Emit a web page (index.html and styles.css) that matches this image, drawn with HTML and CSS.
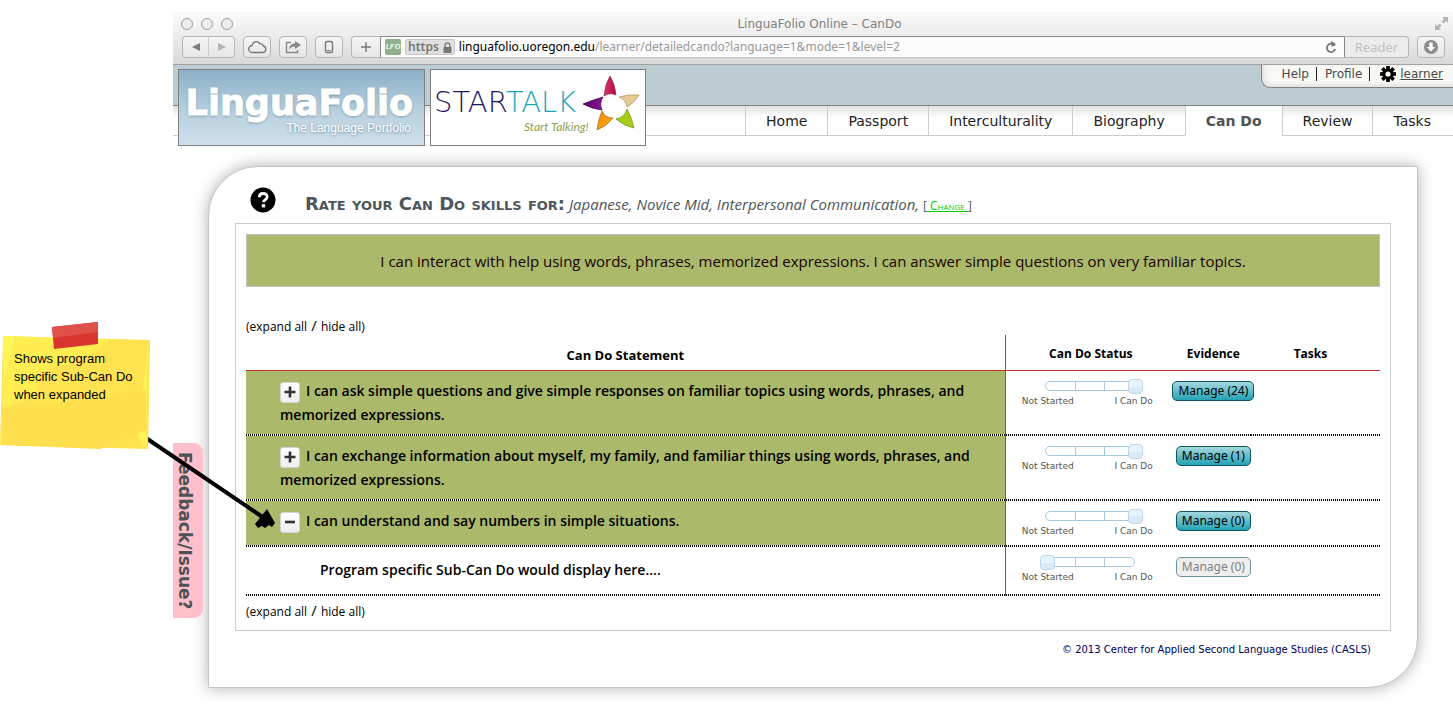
FILE: index.html
```html
<!DOCTYPE html>
<html lang="en">
<head>
<meta charset="utf-8">
<title>LinguaFolio Online – CanDo</title>
<link rel="stylesheet" href="styles.css">
</head>
<body>
<div class="window">
  <header class="chrome">
    <div class="titlebar">
      <div class="lights"><span></span><span></span><span></span></div>
      <div class="title">LinguaFolio Online – CanDo</div>
      <svg class="fullscreen" width="15" height="15" viewBox="0 0 15 15"><path d="M8 1h6v6l-2-2-2.500 2.500-2-2L10 3zM1 8l2 2 2.500-2.500 2 2L5 12l2 2H1z" fill="#b4b4b4"/></svg>
    </div>
    <div class="toolbar">
      <div class="pair">
        <button class="tool" aria-label="Back"><svg width="10" height="10" viewBox="0 0 10 10"><path d="M9 1v8L1 5z" fill="#7c7c7c"/></svg></button>
        <button class="tool" aria-label="Forward"><svg width="10" height="10" viewBox="0 0 10 10"><path d="M1 1v8l8-4z" fill="#b5b5b5"/></svg></button>
      </div>
      <button class="tool" aria-label="iCloud"><svg width="20" height="14" viewBox="0 0 20 14"><path d="M5 12.500h10.500a3.300 3.300 0 0 0 .8-6.500 3.300 3.300 0 0 0-3.600-2.400A4 4 0 0 0 5.300 5.500 3.500 3.500 0 0 0 5 12.500z" fill="none" stroke="#777" stroke-width="1.300"/></svg></button>
      <button class="tool" aria-label="Share"><svg width="18" height="14" viewBox="0 0 18 14"><path d="M7 2.500H2.500v10h11V10" fill="none" stroke="#888" stroke-width="1.400"/><path d="M11 1l6 4-6 4V6.500c-3 0-4.500 1-6 3 .4-3.500 2.500-6 6-6z" fill="#888"/></svg></button>
      <button class="tool" aria-label="Device"><svg width="10" height="14" viewBox="0 0 10 14"><rect x="1.500" y="1.500" width="7" height="11" rx="1.500" fill="none" stroke="#777" stroke-width="1.400"/><path d="M3 10.500h4" stroke="#777"/></svg></button>
      <div class="address">
        <button class="add" aria-label="Add bookmark"><svg width="12" height="12" viewBox="0 0 12 12"><path d="M6 1v10M1 6h10" stroke="#777" stroke-width="1.400"/></svg></button>
        <div class="field">
          <span class="favicon">LFO</span>
          <span class="https">https <svg width="9" height="11" viewBox="0 0 9 11"><path d="M2.200 5.500V3.200a2.300 2.300 0 0 1 4.600 0V5.500" fill="none" stroke="#777" stroke-width="1.300"/><path d="M.5 5h8v6h-8z" fill="#777"/></svg></span>
          <span class="url"><b>linguafolio.uoregon.edu</b>/learner/detailedcando?language=1&amp;mode=1&amp;level=2</span>
          <svg class="reload" width="12" height="13" viewBox="0 0 12 13"><path d="M9.800 4.700A4.200 4.200 0 1 0 10.200 8" fill="none" stroke="#777" stroke-width="1.800"/><path d="M6 0l5 3-4.500 3z" fill="#777"/></svg>
        </div>
        <button class="reader" disabled>Reader</button>
      </div>
      <button class="tool" aria-label="Downloads"><svg width="14" height="14" viewBox="0 0 14 14"><circle cx="7" cy="7" r="7" fill="#8b8b8b"/><path d="M5.300 2.500h3.400V7h2.600L7 11.500 2.700 7h2.600z" fill="#fff"/></svg></button>
    </div>
  </header>

  <div class="site-head">
    <div class="logos">
      <a class="logo-lf" href="#"><span class="lf-name">LinguaFolio</span><span class="lf-tag">The Language Portfolio</span></a>
      <a class="logo-st" href="#">
        <svg width="214" height="75" viewBox="0 0 214 75">
          <defs>
            <linearGradient id="g1" x1="0" x2="1"><stop offset="0" stop-color="#e0306c"/><stop offset="1" stop-color="#b00f45"/></linearGradient>
            <linearGradient id="g2" x1="0" x2="1"><stop offset="0" stop-color="#520064"/><stop offset="1" stop-color="#8a1a96"/></linearGradient>
            <linearGradient id="g3" x1="0" x2="1" y2="1"><stop offset="0" stop-color="#ff7a00"/><stop offset="1" stop-color="#ffb91e"/></linearGradient>
          </defs>
          <text class="st-text" x="3" y="42"><tspan fill="#1c1464">STAR</tspan><tspan fill="#18a8ba">TALK</tspan></text>
          <text class="st-sub" x="93" y="61" fill="#8da04e">Start Talking!</text>
          <path d="M179 6Q174 14 173 26Q179 22 185 25Q184 14 179 6z" fill="url(#g1)" stroke="#8c3058" stroke-width=".7"/>
          <path d="M152 34Q161 30 172 27Q168 33 171 40Q161 39 152 34z" fill="url(#g2)" stroke="#400050" stroke-width=".7"/>
          <path d="M208 25Q199 24 188 27Q195 30 196 37Q203 33 208 25z" fill="#e6cb92" stroke="#a98b54" stroke-width=".7"/>
          <path d="M166 60Q167 50 171 41Q174 48 182 48Q176 56 166 60z" fill="url(#g3)" stroke="#9c6a20" stroke-width=".7"/>
          <path d="M203 58Q201 48 196 39Q194 47 185 49Q193 56 203 58z" fill="#a5cc16" stroke="#6f8d1f" stroke-width=".7"/>
        </svg>
      </a>
    </div>
    <div class="head-right">
      <div class="user-links">
        <a href="#">Help</a><a href="#">Profile</a>
        <a class="learner" href="#"><svg width="16" height="16" viewBox="-8 -8 16 16"><g fill="#000"><rect x="-1.800" y="-8" width="3.600" height="16"/><rect x="-1.800" y="-8" width="3.600" height="16" transform="rotate(45)"/><rect x="-1.800" y="-8" width="3.600" height="16" transform="rotate(90)"/><rect x="-1.800" y="-8" width="3.600" height="16" transform="rotate(135)"/><circle r="5.800"/></g><circle r="2.600" fill="#f8f8f4"/></svg><span>learner</span></a>
      </div>
    </div>
    <nav class="tabs">
      <a href="#">Home</a><a href="#">Passport</a><a href="#">Interculturality</a><a href="#">Biography</a><a class="active" href="#">Can Do</a><a href="#">Review</a><a href="#">Tasks</a>
    </nav>
  </div>

  <main class="panel">
    <div class="heading">
      <svg class="help" width="26" height="26" viewBox="0 0 26 26"><circle cx="13" cy="13" r="12.500"/><path d="M9.300 10.300q0-3.800 3.900-3.800t3.900 3.300q0 1.700-1.900 2.900-1.700 1-1.700 2.600" fill="none" stroke="#fff" stroke-width="2.800"/><rect x="11.800" y="17.200" width="3.400" height="3.200" fill="#fff"/></svg>
      <h1>Rate your Can Do skills for:</h1>
      <p class="selection"><i>Japanese, Novice Mid, Interpersonal Communication,</i> <span class="change">[<a href="#"> Change </a>]</span></p>
    </div>
    <section class="box">
      <div class="banner">I can interact with help using words, phrases, memorized expressions. I can answer simple questions on very familiar topics.</div>
      <div class="toggle top"><a href="#">(expand all</a> <span>/</span> <a href="#">hide all)</a></div>
      <table class="cando">
        <colgroup><col class="c1"><col class="c2"><col class="c3"><col></colgroup>
        <thead><tr><th class="main">Can Do Statement</th><th>Can Do Status</th><th>Evidence</th><th class="tasks">Tasks</th></tr></thead>
        <tbody>
          <tr class="tall">
            <td class="statement"><button class="exp" aria-label="Expand"><svg width="12" height="12" viewBox="0 0 12 12"><path d="M6 .5v11M.5 6h11" stroke="#333" stroke-width="2.600"/></svg></button>I can ask simple questions and give simple responses on familiar topics using words, phrases, and memorized expressions.</td>
            <td><div class="status"><div class="slider"><svg width="103" height="15" viewBox="0 0 103 15"><rect class="track" x="5.500" y="2.500" width="89" height="9" rx="4.500"/><path class="track" d="M35.500 3v8M64.500 3v8"/></svg><input type="range" min="0" max="3" value="3" aria-label="Status"></div><div class="ends"><span>Not Started</span><span>I Can Do</span></div></div></td>
            <td class="ev"><button class="manage">Manage (24)</button></td><td></td>
          </tr>
          <tr class="tall">
            <td class="statement"><button class="exp" aria-label="Expand"><svg width="12" height="12" viewBox="0 0 12 12"><path d="M6 .5v11M.5 6h11" stroke="#333" stroke-width="2.600"/></svg></button>I can exchange information about myself, my family, and familiar things using words, phrases, and memorized expressions.</td>
            <td><div class="status"><div class="slider"><svg width="103" height="15" viewBox="0 0 103 15"><rect class="track" x="5.500" y="2.500" width="89" height="9" rx="4.500"/><path class="track" d="M35.500 3v8M64.500 3v8"/></svg><input type="range" min="0" max="3" value="3" aria-label="Status"></div><div class="ends"><span>Not Started</span><span>I Can Do</span></div></div></td>
            <td class="ev"><button class="manage">Manage (1)</button></td><td></td>
          </tr>
          <tr class="short">
            <td class="statement"><button class="exp" aria-label="Collapse"><svg width="12" height="12" viewBox="0 0 12 12"><path d="M1 6h10" stroke="#333" stroke-width="2.600"/></svg></button>I can understand and say numbers in simple situations.</td>
            <td><div class="status"><div class="slider"><svg width="103" height="15" viewBox="0 0 103 15"><rect class="track" x="5.500" y="2.500" width="89" height="9" rx="4.500"/><path class="track" d="M35.500 3v8M64.500 3v8"/></svg><input type="range" min="0" max="3" value="3" aria-label="Status"></div><div class="ends"><span>Not Started</span><span>I Can Do</span></div></div></td>
            <td class="ev"><button class="manage">Manage (0)</button></td><td></td>
          </tr>
          <tr class="sub">
            <td class="statement">Program specific Sub-Can Do would display here....</td>
            <td><div class="status"><div class="slider"><svg width="103" height="15" viewBox="0 0 103 15"><rect class="track" x="5.500" y="2.500" width="89" height="9" rx="4.500"/><path class="track" d="M35.500 3v8M64.500 3v8"/></svg><input type="range" min="0" max="3" value="0" aria-label="Status"></div><div class="ends"><span>Not Started</span><span>I Can Do</span></div></div></td>
            <td class="ev"><button class="manage" disabled>Manage (0)</button></td><td></td>
          </tr>
        </tbody>
      </table>
      <div class="toggle bottom"><a href="#">(expand all</a> <span>/</span> <a href="#">hide all)</a></div>
    </section>
    <footer>© 2013 Center for Applied Second Language Studies (CASLS)</footer>
  </main>
</div>

<button class="feedback">Feedback/Issue?</button>

<svg class="arrow" width="140" height="100" viewBox="0 0 140 100"><path d="M6 4L124 84" stroke="#000" stroke-width="4"/><path d="M135 89l-8-14-4 5-8 10 3 4 4-2 3 2 4-3 3 2z" fill="#000"/></svg>

<aside class="note">
  <svg class="paper" width="150" height="130" viewBox="0 0 150 130">
    <path d="M3 16L150 20L148 129L0 125z" fill="#ffe24f"/>
    <path d="M3 16L110 19Q90 40 60 46T40 75L3 88z" fill="#fff052" opacity=".75"/>
    <path d="M3 16h12L4 60zM148 22l-2 107-8-12zM0 125l2-36 4 34z" fill="#fffb5c" opacity=".7"/>
    <path d="M2 88L60 84 146 70V110L100 129 1 125z" fill="#ffdf4d"/>
    <path d="M52 7L98 2V24L54 29z" fill="#d9352c"/><path d="M52 7L98 2V12L53 18z" fill="#de5048"/>
  </svg>
  <p>Shows program<br>specific Sub-Can Do<br>when expanded</p>
</aside>
</body>
</html>
```
FILE: styles.css
```css
* { box-sizing: border-box; }
body { margin: 0; display: flow-root; background: #fff; font-family: Verdana, "DejaVu Sans", sans-serif; position: relative; }
button { font-family: inherit; padding: 0; margin: 0; }
a { color: inherit; text-decoration: none; }
h1, p { margin: 0; }

.window { margin: 12px 0 0 173px; overflow: hidden; padding-bottom: 20px; }

/* browser chrome */
.chrome { background: linear-gradient(#fafafa, #ececec 45%, #d9d9d9); border-bottom: 1px solid #a3a3a3; font-family: "Lucida Grande", "Noto Sans", sans-serif; color: #808080; }
.titlebar { display: flex; align-items: center; height: 23px; padding: 0 4px 0 8px; }
.lights { display: flex; gap: 8px; width: 60px; }
.lights span { width: 12px; height: 12px; border: 1px solid #a0a0a0; border-radius: 50%; background: #ededed; }
.title { flex: 1; text-align: center; font: 12px/22px "Lucida Grande", "DejaVu Sans", sans-serif; }
.fullscreen { margin-left: 36px; }
.toolbar { display: flex; gap: 8px; height: 29px; padding: 1px 8px 0 9px; }
.tool { width: 28px; height: 22px; border: 1px solid #b5b5b5; border-radius: 4px; background: linear-gradient(#f5f5f5, #e6e6e6); display: flex; align-items: center; justify-content: center; }
.pair { display: flex; }
.pair .tool { width: 27px; }
.pair .tool:first-child { border-radius: 4px 0 0 4px; border-right-color: #ccc; }
.pair .tool:last-child { border-radius: 0 4px 4px 0; border-left: 0; width: 26px; }
.address { flex: 1; display: flex; height: 22px; }
.add { width: 30px; border: 1px solid #b5b5b5; border-right-color: #888; border-radius: 4px 0 0 4px; background: linear-gradient(#f5f5f5, #e6e6e6); display: flex; align-items: center; justify-content: center; }
.field { flex: 1; display: flex; align-items: center; border-top: 1px solid #888; border-bottom: 1px solid #c2c2c2; background: #fcfcfc; padding: 0 7px 0 4px; font-size: 12px; line-height: 20px; color: #999; white-space: nowrap; }
.field b { font-weight: 400; color: #000; }
.favicon { width: 16px; height: 16px; border-radius: 2px; background: #8fb08c; color: #e6f0e2; font: italic bold 7px/16px "DejaVu Sans", sans-serif; text-align: center; margin-right: 4px; }
.https { display: flex; gap: 4px; align-items: center; height: 16px; padding: 0 2px; border: 1px solid #c6c6c6; border-radius: 2px; background: #e0e0e0; color: #777; font-weight: 600; margin-right: 4px; }
.url { flex: 1; }
.reader { width: 65px; border: 1px solid #b5b5b5; border-left-color: #888; border-radius: 0 4px 4px 0; background: #ececec; color: #c0c0c0; font-size: 13px; }

/* site header */
.site-head { position: relative; background: #bdcbd3; }
.logos { position: absolute; left: 5px; top: 4px; display: flex; gap: 5px; z-index: 2; }
.logo-lf { width: 247px; height: 77px; border: 1px solid #808080; background: linear-gradient(#8bb0c8, #b9d0de 55%, #cee0ec); color: #fff; display: flex; flex-direction: column; align-items: flex-end; padding: 14px 11px 0 0; text-shadow: 0 1px 3px #68889c; }
.lf-name { font: bold 35px/38px "DejaVu Sans", sans-serif; -webkit-text-stroke: 1px #fff; }
.lf-tag { font: 12px/12px "Liberation Sans", sans-serif; padding-right: 2px; }
.logo-st { width: 216px; height: 77px; border: 1px solid #808080; background: #fff; }
.logo-st svg { display: block; }
.st-text { font: 200 29px "DejaVu Sans", sans-serif; }
.st-sub { font: italic 12px Lato, sans-serif; }
.head-right { display: flex; justify-content: flex-end; height: 40px; align-items: flex-start; }
.user-links { display: flex; align-items: center; height: 23px; border: 1px solid #808080; border-top: 0; border-right: 0; border-radius: 0 0 0 9px; background: #f8f8f4; box-shadow: inset 2px -2px 5px #ddd; padding: 0 10px 4px 12px; font-size: 12px; line-height: 14px; color: #4a4a4a; }
.user-links a { padding: 0 7px 0 8px; border-right: 1px solid #222; }
.user-links a.learner { display: flex; align-items: center; gap: 4px; border: 0; padding-right: 0; padding-left: 10px; }
.learner span { text-decoration: underline; }
.tabs { display: flex; justify-content: flex-end; border-top: 1px solid #808080; background: linear-gradient(#e2e2e2, #fff 12px); }
.tabs::before { content: ""; flex: 1; border-bottom: 1px solid #ccc; }
.tabs a { height: 30px; padding: 0 20px; border-left: 1px solid #ccc; border-bottom: 1px solid #ccc; font-size: 14px; line-height: 30px; color: #222; }
.tabs a:last-child { padding-right: 22px; }
.tabs a.active { font-weight: 700; color: #4d5256; background: #fff; border-bottom-color: #fff; }

/* content panel */
.panel { margin: 30px 35px 0; border: 1px solid #c4c4c4; border-radius: 50px 0 50px 0; background: #fff; box-shadow: 0 0 16px #b0b0b0; padding: 17px 26px 30px 26px; }
.heading { display: flex; align-items: baseline; height: 39px; padding-left: 15px; color: #4d565a; }
.help { align-self: flex-start; margin: 3px 29px 0 0; }
h1 { font-size: 18px; line-height: 40px; font-variant: small-caps; white-space: nowrap; }
.selection { font-size: 15px; line-height: 40px; margin-left: 4px; white-space: nowrap; font-family: "Comic Sans MS", "Open Sans", sans-serif; }
.change { font-size: 12px; font-variant: small-caps; }
.change a { color: #0c0; text-decoration: underline; white-space: pre; }
.box { border: 1px solid #ccc; padding: 10px; font-family: "Comic Sans MS", "Open Sans", sans-serif; color: #000; }
.banner { border: 1px solid #c0c0c8; background: #aaba6a; color: #200000; text-align: center; font-size: 15px; line-height: 21px; padding: 16px 8px 14px; }
.toggle { font-size: 12px; line-height: 16px; }
.toggle span { font-size: 15px; padding: 0 1px; }
.toggle.top { padding: 30px 0 0; }
.toggle.bottom { padding: 6px 0 0; }
.cando { width: 100%; border-collapse: separate; border-spacing: 0; table-layout: fixed; }
.c1 { width: 67%; } .c2 { width: 15%; } .c3 { width: 75px; }
th { height: 36px; padding: 3px 0 0; font-size: 12px; line-height: 16px; border-bottom: 1px solid #c8322a; white-space: nowrap; }
th.main { font-size: 13px; padding-top: 5px; }
th.tasks { padding-right: 10px; }
th.main, td.statement { border-right: 1px solid #b04038; }
td { padding: 0 0 2px; vertical-align: top; background: repeating-linear-gradient(90deg, #000 0 1px, #fff 1px 2px) bottom / 100% 2px no-repeat; }
.statement { padding: 8px 15px 2px 34px; font-size: 14px; line-height: 24px; font-weight: 600; }
.tall .statement, .short .statement { background-color: #aaba6a; }
.tall td { height: 65px; } .short td { height: 46px; } .sub td { height: 49px; }
.sub .statement { padding: 11px 15px 2px 74px; }
.exp { display: inline-flex; width: 20px; height: 21px; margin-right: 6px; align-items: center; justify-content: center; vertical-align: middle; border: 1px solid #d4d4d4; border-radius: 3px; background: linear-gradient(#fff, #eee); }
.status { width: 131px; margin: 8px 0 0 16px; }
.slider { display: grid; width: 103px; height: 15px; margin-left: 18px; }
.slider > * { grid-area: 1 / 1; }
.track { fill: #fff; stroke: #a5c9e2; }
.slider input { appearance: none; width: 103px; height: 15px; margin: 0; background: none; }
.slider input::-webkit-slider-thumb { appearance: none; width: 15px; height: 15px; border: 1px solid #bcd6ea; border-radius: 4px; background: linear-gradient(#e9f3fc 50%, #d8e9f7 50%); }
.ends { display: flex; justify-content: space-between; font: 9px/14px "Lucida Grande", "DejaVu Sans", sans-serif; color: #555; }
.ev { text-align: center; }
.manage { height: 20px; margin: 10px -8px 0; padding: 0 5px; border: 1px solid #0d5560; border-radius: 5px; background: linear-gradient(#a4d8de, #23a3b5); color: #000; font: 12px/16px "Lucida Grande", "Noto Sans", sans-serif; white-space: nowrap; }
.manage:disabled { background: #eee; border-color: #6d9598; color: #808080; }
footer { padding: 12px 20px 0 0; text-align: right; font-size: 10px; line-height: 14px; color: #000060; }

/* overlays */
.feedback { position: absolute; left: 173px; top: 443px; width: 30px; height: 175px; border: 0; border-radius: 0 9px 9px 0; background: #ffc0cb; color: #4d5256; font-size: 17px; font-weight: 700; writing-mode: vertical-rl; white-space: nowrap; padding-right: 7px; }
.arrow { position: absolute; left: 140px; top: 434px; }
.note { position: absolute; left: 0; top: 320px; width: 150px; }
.paper { display: block; position: absolute; left: 0; top: 0; }
.note p { position: relative; padding: 30px 0 0 14px; font: 13px/18px "Liberation Sans", sans-serif; color: #000; white-space: nowrap; }
```
